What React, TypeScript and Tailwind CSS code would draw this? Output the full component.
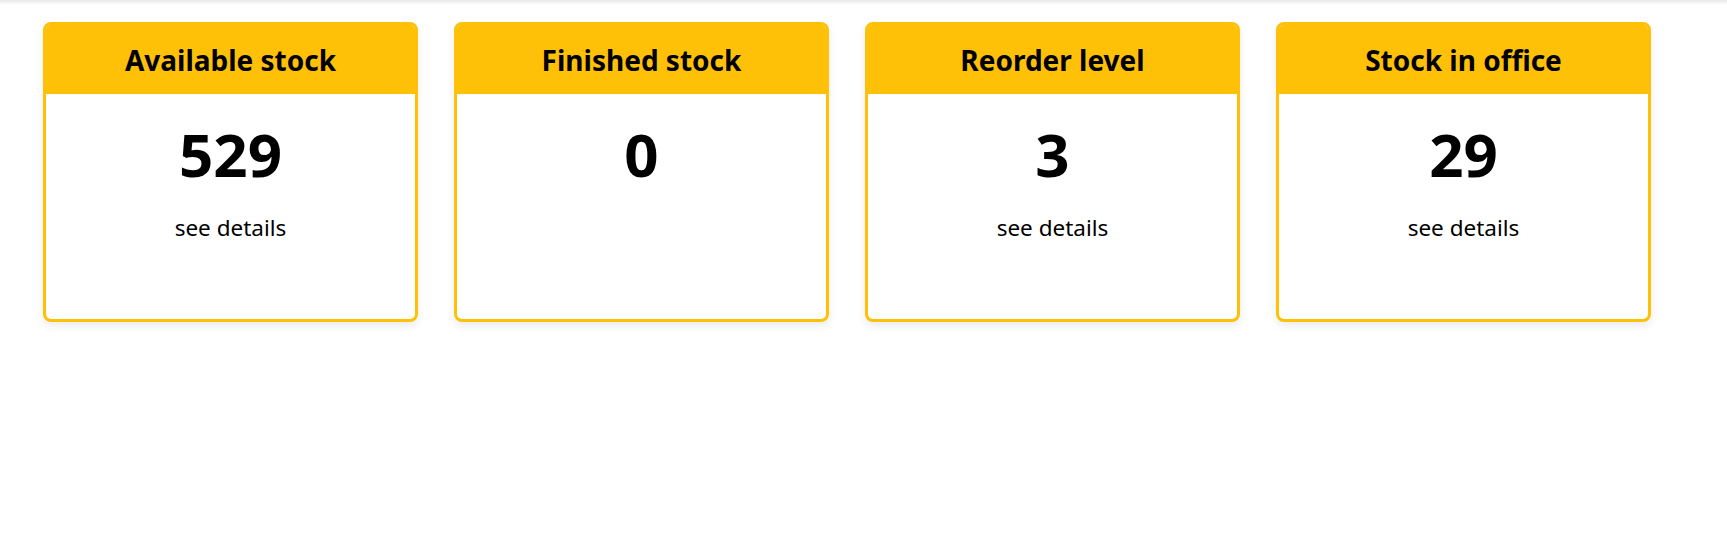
import React from "react";

const cards = [
  { title: "Available stock", value: "529", details: true },
  { title: "Finished stock", value: "0", details: false },
  { title: "Reorder level", value: "3", details: true },
  { title: "Stock in office", value: "29", details: true },
];

export default function App() {
  return (
    <div className="min-h-[551px] bg-white" style={{ fontFamily: '"Noto Sans", "Open Sans", sans-serif' }}>
      <div className="h-[5px] bg-gradient-to-b from-[#e9e9e9] to-white" />
      <div className="flex gap-[36px] pl-[43px] pt-[17px]">
        {cards.map((c) => (
          <div
            key={c.title}
            className="w-[375px] h-[300px] border-[3px] border-[#FFC107] rounded-[8px] overflow-hidden shadow-[0_4px_8px_rgba(0,0,0,0.08)] flex flex-col bg-white"
          >
            <div className="h-[69px] bg-[#FFC107] flex items-center justify-center">
              <span className="text-[28px] font-bold text-black leading-none">{c.title}</span>
            </div>
            <div className="flex flex-col items-center pt-[30px]">
              <span className="text-[60px] font-bold text-black leading-none">{c.value}</span>
              {c.details && (
                <span className="mt-[33px] text-[22.5px] text-black leading-none">see details</span>
              )}
            </div>
          </div>
        ))}
      </div>
    </div>
  );
}
